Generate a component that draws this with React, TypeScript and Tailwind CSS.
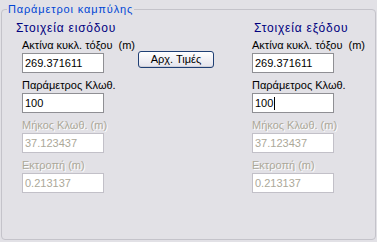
import React from 'react';

type Field = {
  label: string;
  value: string;
  disabled?: boolean;
  caret?: boolean;
};

const inputFields: Field[] = [
  { label: 'Ακτίνα κυκλ. τόξου  (m)', value: '269.371611' },
  { label: 'Παράμετρος Κλωθ.', value: '100' },
  { label: 'Μήκος Κλωθ. (m)', value: '37.123437', disabled: true },
  { label: 'Εκτροπή (m)', value: '0.213137', disabled: true },
];

const outputFields: Field[] = [
  { label: 'Ακτίνα κυκλ. τόξου  (m)', value: '269.371611' },
  { label: 'Παράμετρος Κλωθ.', value: '100', caret: true },
  { label: 'Μήκος Κλωθ. (m)', value: '37.123437', disabled: true },
  { label: 'Εκτροπή (m)', value: '0.213137', disabled: true },
];

function FieldRow({ field, first }: { field: Field; first: boolean }) {
  return (
    <div className={first ? 'mt-[3px]' : 'mt-[5px]'}>
      <div
        className={`h-[14px] leading-[14px] whitespace-pre ${
          field.disabled ? 'text-[#aca899] [text-shadow:1px_1px_0_#ffffff]' : 'text-black'
        }`}
      >
        {field.label}
      </div>
      <div
        className={`mt-[1px] flex h-[20px] w-[82px] items-center border bg-white pl-[2px] ${
          field.disabled ? 'border-[#c2c0c8] text-[#aca899]' : 'border-[#8f8f94] text-black'
        }`}
      >
        <span>{field.value}</span>
        {field.caret && <span className="ml-[1px] h-[13px] w-[1px] bg-black" />}
      </div>
    </div>
  );
}

export default function App() {
  return (
    <div className="h-[242px] w-[377px] bg-[#e2e1e6] pl-[1px] pt-[2px] text-[11px] [font-family:'Liberation_Sans',Arial,sans-serif]">
      <fieldset className="h-[238px] w-[375px] rounded-[4px] border border-[#c4c3ca]">
        <legend className="ml-[5px] px-[1px] text-[11px] leading-[14px] tracking-[0.85px] text-[#0046d5]">
          Παράμετροι καμπύλης
        </legend>

        <div className="flex pt-[5px]">
          {/* input column */}
          <div className="ml-[14px] w-[106px]">
            <div className="h-[14px] text-[12px] leading-[14px] tracking-[0.8px] text-[#000080]">Στοιχεία εισόδου</div>
            <div className="pl-[6px]">
              {inputFields.map((f, i) => (
                <FieldRow key={f.label} field={f} first={i === 0} />
              ))}
            </div>
          </div>

          {/* reset button */}
          <div className="ml-[16px] pt-[30px]">
            <button className="flex h-[17px] w-[76px] items-center justify-center rounded-[3px] border border-[#1f3f74] bg-gradient-to-b from-white to-[#e4e3ec] text-black shadow-[inset_0_-1px_0_#cfcfd8]">
              Αρχ. Τιμές
            </button>
          </div>

          {/* output column */}
          <div className="ml-[38px] w-[106px]">
            <div className="h-[14px] pl-[2px] text-[12px] leading-[14px] tracking-[0.8px] text-[#000080]">Στοιχεία εξόδου</div>
            <div>
              {outputFields.map((f, i) => (
                <FieldRow key={f.label} field={f} first={i === 0} />
              ))}
            </div>
          </div>
        </div>
      </fieldset>
    </div>
  );
}
